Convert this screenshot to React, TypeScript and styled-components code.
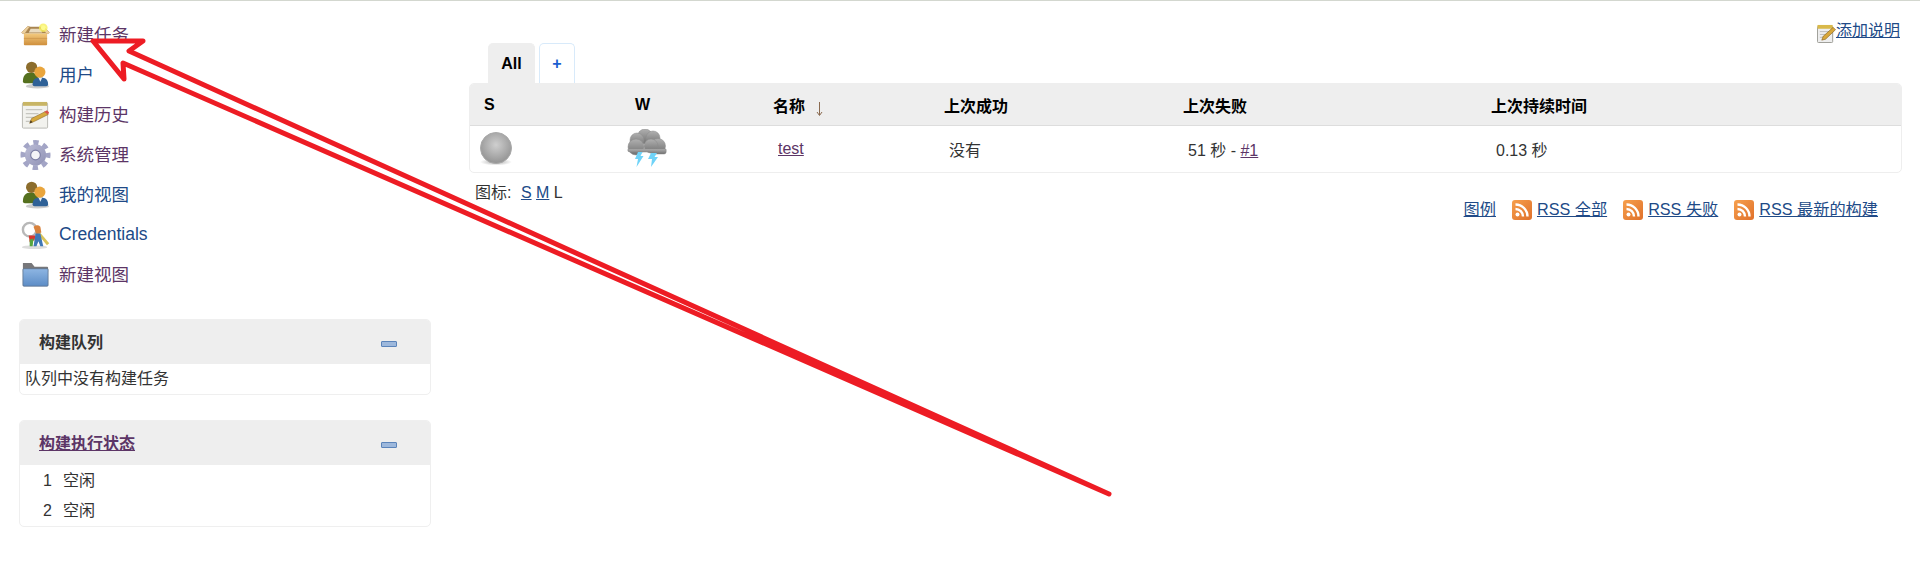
import React from "react";
import styled, { createGlobalStyle } from "styled-components";

const GlobalStyle = createGlobalStyle`
	html, body {
		margin: 0;
		padding: 0;
		background: #fff;
	}
	body {
		font-family: "Liberation Sans", "Noto Sans CJK SC", sans-serif;
		font-size: 16px;
		color: #333;
	}
`;

const Page = styled.div`
	position: relative;
	width: 1920px;
	height: 577px;
	overflow: hidden;
	border-top: 1px solid #d3d7cf;
	box-sizing: border-box;
	display: flex;
`;

const Side = styled.aside`
	width: 412px;
	margin: 0 38px 0 19px;
	padding-top: 13px;
	flex: none;
`;
const TaskRow = styled.div`
	height: 40px;
	padding-left: 1px;
	display: flex;
	align-items: center;
	gap: 8px;
	svg {
		flex: none;
		width: 31px;
		height: 31px;
		margin-top: 3px;
	}
`;
const Link = styled.a<{ $visited?: boolean; $bold?: boolean }>`
	color: ${(props) => (props.$visited ? "#5c3566" : "#204a87")};
	font-weight: ${(props) => (props.$bold ? 700 : 400)};
	text-decoration: underline;
	cursor: pointer;
`;
const TaskLink = styled(Link)<{ $latin?: boolean }>`
	font-size: 17.5px;
	text-decoration: none;
	margin-bottom: ${(props) => (props.$latin ? 0 : 2)}px;
`;

const Pane = styled.section`
	margin-top: 25px;
	border: 1px solid #efefef;
	border-radius: 5px;
	overflow: hidden;
`;
const PaneHead = styled.div`
	height: 44px;
	background: #eee;
	padding: 0 33px 3px 19px;
	display: flex;
	align-items: center;
	justify-content: space-between;
	font-weight: 700;
	box-sizing: border-box;
`;
const CollapseIcon = styled.span`
	width: 16px;
	height: 6px;
	background: #9db8dc;
	border: 1px solid #5b84ba;
	border-radius: 1px;
	box-sizing: border-box;
	margin-top: 7px;
`;
const QueueEmpty = styled.div`
	padding: 0 5px;
	height: 30px;
	line-height: 29px;
`;
const ExecutorList = styled.div`
	padding-top: 1px;
`;
const ExecutorRow = styled.div`
	display: flex;
	height: 30px;
	line-height: 30px;
`;
const ExecutorNum = styled.span`
	width: 32px;
	margin-right: 11px;
	text-align: right;
`;

const Main = styled.main`
	width: 1431px;
	flex: none;
`;
const DescriptionRow = styled.div`
	height: 42px;
	padding-top: 20px;
	box-sizing: border-box;
	display: flex;
	justify-content: flex-end;
	align-items: flex-start;
	line-height: 20px;
	svg {
		width: 19px;
		height: 19px;
		margin-top: 3px;
	}
`;
const Tabs = styled.div`
	display: flex;
	gap: 4px;
	padding-left: 19px;
	height: 40px;
`;
const Tab = styled.div<{ $active?: boolean }>`
	height: 40px;
	width: ${(props) => (props.$active ? "47px" : "36px")};
	box-sizing: border-box;
	border-radius: 5px 5px 0 0;
	background: ${(props) => (props.$active ? "#eee" : "#fff")};
	border: 1px solid ${(props) => (props.$active ? "#eee" : "#d8eafa")};
	border-bottom: none;
	color: ${(props) => (props.$active ? "#000" : "#1a5fd0")};
	font-weight: 700;
	display: flex;
	align-items: center;
	justify-content: center;
`;
const ProjectTable = styled.table`
	width: 100%;
	table-layout: fixed;
	border-collapse: separate;
	border-spacing: 0;
	border: 1px solid #eee;
	border-radius: 5px;
	overflow: hidden;
	height: 90px;
`;
const HeadCell = styled.th`
	height: 42px;
	padding: 0 0 0 14px;
	background: #eee;
	border-bottom: 1px solid #ddd;
	color: #000;
	font-weight: 700;
	text-align: left;
	box-sizing: border-box;
`;
const SortArrow = styled.svg`
	width: 7px;
	height: 14px;
	margin-left: 11px;
	vertical-align: -4px;
`;
const BodyCell = styled.td<{ $inset?: number }>`
	padding: 0 0 0 ${(props) => props.$inset ?? 19}px;
	height: 46px;
	svg {
		display: block;
	}
`;
const Footer = styled.div`
	display: flex;
	justify-content: space-between;
	align-items: flex-start;
	padding: 9px 22px 0 6px;
`;
const Legend = styled.div`
	line-height: 22px;
`;
const LegendLink = styled(Link)`
	margin-left: 5px;
`;
const RssList = styled.div`
	display: flex;
	align-items: center;
	margin-top: 16px;
	gap: 16px;
	line-height: 22px;
	font-size: 16.2px;
`;
const RssItem = styled.span`
	display: flex;
	align-items: center;
	gap: 5px;
	svg {
		width: 20px;
		height: 20px;
		margin-top: 2px;
	}
`;
const Arrow = styled.svg`
	position: absolute;
	left: 0;
	top: -1px;
	pointer-events: none;
`;

const BoxIcon = () => (
	<svg viewBox="0 0 32 32">
		<defs>
			<linearGradient id="boxFront" x1="0" y1="0" x2="0" y2="1">
				<stop offset="0" stopColor="#f3ca7e" />
				<stop offset="1" stopColor="#cf8f3c" />
			</linearGradient>
		</defs>
		<path d="M8 7h16l4 7H4z" fill="#a98550" />
		<path d="M11 9h10l2 4H9z" fill="#eadcc0" />
		<path d="M1.500 13 8 6.500l2 .5-5 7H2.500zM30.500 13 24 6.500l-2 .5 5 7h2.500z" fill="#ecd09e" stroke="#b98c50" strokeWidth=".5" />
		<path d="M4 14h24v11q0 1-1 1H5q-1 0-1-1z" fill="url(#boxFront)" />
		<path d="M4 19h24" stroke="#b87d34" strokeWidth="1" opacity=".4" />
		<circle cx="24" cy="8" r="4.500" fill="#f8ef5c" opacity=".8" />
		<circle cx="24" cy="8" r="2.500" fill="#fdfb8f" />
	</svg>
);
const UsersIcon = () => (
	<svg viewBox="0 0 32 32">
		<ellipse cx="18" cy="27" rx="12" ry="2.500" fill="#ccc" />
		<path d="M3 22c0-6 3-9 8-9s8 3 8 9q0 2-2 2H5q-2 0-2-2z" fill="#55701f" />
		<circle cx="12" cy="7.500" r="5.800" fill="#8c6d2d" />
		<path d="M13 25c0-5 3-7 8-7s8 2 8 7q0 2-2 2H15q-2 0-2-2z" fill="#2f6197" />
		<path d="M19 18h4l-2 4.500z" fill="#e7edf3" />
		<circle cx="20.500" cy="12.500" r="5.800" fill="#e9a53d" />
	</svg>
);
const NotepadIcon = () => (
	<svg viewBox="0 0 32 32">
		<rect x="2.500" y="3" width="26" height="26" rx="1" fill="#f2f2ee" stroke="#b9b9b3" />
		<rect x="3" y="2" width="25" height="4" fill="#c8b565" />
		<path d="M6 10h17M6 14h13M6 18h9M6 22h6" stroke="#c6c6c0" strokeWidth="1.200" />
		<path d="m10 24 2-5 14-7 3 3-14 7z" fill="#d7a93d" stroke="#8a6620" strokeWidth=".6" />
		<path d="m25 12 3-1.500 2 2.500-1 2z" fill="#d9534a" />
		<path d="m10 24 1-3 2 2z" fill="#4a3a20" />
	</svg>
);
const GearIcon = () => (
	<svg viewBox="0 0 32 32">
		<defs>
			<linearGradient id="gearFill" x1="0" y1="0" x2="1" y2="1">
				<stop offset="0" stopColor="#bcbdd6" />
				<stop offset="1" stopColor="#8f91b5" />
			</linearGradient>
		</defs>
		<circle cx="16" cy="15.500" r="11" fill="url(#gearFill)" />
		<circle cx="16" cy="15.500" r="13" fill="none" stroke="#a3a5c6" strokeWidth="5" strokeDasharray="5.500 4.710" strokeDashoffset="2.700" />
		<circle cx="16" cy="15.500" r="5" fill="#f4f4f8" stroke="#7d7fa5" strokeWidth="1.200" />
	</svg>
);
const KeysIcon = () => (
	<svg viewBox="0 0 32 32">
		<ellipse cx="15" cy="28" rx="13" ry="2" fill="#ddd" />
		<circle cx="10" cy="10" r="7" fill="none" stroke="#b8b8b8" strokeWidth="2.500" />
		<path d="m18 12 11 13" stroke="#d8c35a" strokeWidth="3" />
		<path d="M9 16h7l-1 5-5 2z" fill="#d8372f" />
		<path d="M14 7q4-3 7 0l1 6-5 2z" fill="#d9823c" />
		<path d="M16 14h5l3 13h-3l-2-5-2 5h-3z" fill="#3f77b5" />
		<path d="m10 20 4-1-1 8h-3z" fill="#57a53d" />
	</svg>
);
const FolderIcon = () => (
	<svg viewBox="0 0 32 32">
		<defs>
			<linearGradient id="folderFill" x1="0" y1="0" x2="0" y2="1">
				<stop offset="0" stopColor="#8eb6e3" />
				<stop offset="1" stopColor="#5c8cc6" />
			</linearGradient>
		</defs>
		<path d="M3 3h9l3 4h13q1 0 1 1v4H3z" fill="#77777a" />
		<rect x="3" y="9" width="26" height="18" rx="1" fill="url(#folderFill)" stroke="#5a6f8a" strokeWidth=".8" />
	</svg>
);
const BallIcon = () => (
	<svg width="32" height="34" viewBox="0 0 32 34">
		<defs>
			<radialGradient id="ballFill" cx=".5" cy=".4" r=".6">
				<stop offset="0" stopColor="#cfcfcf" />
				<stop offset="1" stopColor="#939393" />
			</radialGradient>
			<radialGradient id="ballShadow">
				<stop offset="0" stopColor="#aaa" />
				<stop offset="1" stopColor="#fff" />
			</radialGradient>
		</defs>
		<ellipse cx="16" cy="30" rx="16" ry="3.500" fill="url(#ballShadow)" />
		<circle cx="16" cy="16" r="15.500" fill="url(#ballFill)" stroke="#a9a9a9" />
	</svg>
);
const StormIcon = () => (
	<svg width="40" height="40" viewBox="0 0 40 40">
		<defs>
			<linearGradient id="cloudFill" x1="0" y1="0" x2="0" y2="1">
				<stop offset="0" stopColor="#b0b0b0" />
				<stop offset="1" stopColor="#707070" />
			</linearGradient>
		</defs>
		<g fill="url(#cloudFill)" stroke="#8a8a8a" strokeWidth=".5">
			<circle cx="18" cy="7.500" r="7.500" />
			<circle cx="26" cy="9" r="7" />
			<circle cx="10" cy="11" r="7" />
			<circle cx="31" cy="17" r="7.500" />
			<circle cx="24" cy="17" r="7" />
			<circle cx="9" cy="18" r="8" />
			<path d="M1 20h38q1 5-2 5H25q-2-3-6-2H3q-3 0-2-3z" />
		</g>
		<path d="M11 23h4.500l-2 4h3L9.500 38l1.500-8H8z" fill="#6fd3f8" />
		<path d="M24 24h6l-2.500 4h3.500l-7 10 1-8h-4z" fill="#6fd3f8" />
	</svg>
);
const NoteIcon = () => (
	<svg viewBox="0 0 20 20">
		<rect x=".5" y="2.500" width="16" height="17" rx="1" fill="#eee" stroke="#9a9a94" />
		<rect x=".5" y="1" width="16" height="4" fill="#d9b94a" />
		<path d="M3 8h10M3 11h7M3 14h5" stroke="#bbb" />
		<path d="m5 17 1.500-4L17 3.500l2.500 2.500L9 16z" fill="#d8a73b" stroke="#7d5a1a" strokeWidth=".6" />
	</svg>
);
const RssIcon = () => (
	<svg viewBox="0 0 20 20">
		<defs>
			<linearGradient id="rssFill" x1="0" y1="0" x2="1" y2="1">
				<stop offset="0" stopColor="#f6a04d" />
				<stop offset="1" stopColor="#e0702a" />
			</linearGradient>
		</defs>
		<rect width="20" height="20" rx="3" fill="url(#rssFill)" />
		<circle cx="5.500" cy="14.500" r="2" fill="#fff" />
		<path d="M3.500 9a7.500 7.500 0 0 1 7.500 7.500M3.500 4.500a12 12 0 0 1 12 12" fill="none" stroke="#fff" strokeWidth="2.400" />
	</svg>
);

const tasks = [
	{ label: "新建任务", icon: <BoxIcon />, visited: true },
	{ label: "用户", icon: <UsersIcon /> },
	{ label: "构建历史", icon: <NotepadIcon />, visited: true },
	{ label: "系统管理", icon: <GearIcon />, visited: true },
	{ label: "我的视图", icon: <UsersIcon /> },
	{ label: "Credentials", icon: <KeysIcon />, latin: true },
	{ label: "新建视图", icon: <FolderIcon />, visited: true },
];

const columnWidths = [151, 138, 171, 239, 308, 424];

function App() {
	return (
		<Page>
			<GlobalStyle />
			<Side>
				{tasks.map((task) => (
					<TaskRow key={task.label}>
						{task.icon}
						<TaskLink $visited={task.visited} $latin={task.latin}>
							{task.label}
						</TaskLink>
					</TaskRow>
				))}
				<Pane>
					<PaneHead>
						<span>构建队列</span>
						<CollapseIcon />
					</PaneHead>
					<QueueEmpty>队列中没有构建任务</QueueEmpty>
				</Pane>
				<Pane>
					<PaneHead>
						<Link $visited $bold>
							构建执行状态
						</Link>
						<CollapseIcon />
					</PaneHead>
					<ExecutorList>
						<ExecutorRow>
							<ExecutorNum>1</ExecutorNum>
							<span>空闲</span>
						</ExecutorRow>
						<ExecutorRow>
							<ExecutorNum>2</ExecutorNum>
							<span>空闲</span>
						</ExecutorRow>
					</ExecutorList>
				</Pane>
			</Side>
			<Main>
				<DescriptionRow>
					<NoteIcon />
					<Link>添加说明</Link>
				</DescriptionRow>
				<Tabs>
					<Tab $active>All</Tab>
					<Tab>+</Tab>
				</Tabs>
				<ProjectTable>
					<colgroup>
						{columnWidths.map((width, index) => (
							<col key={index} width={width} />
						))}
					</colgroup>
					<thead>
						<tr>
							<HeadCell>S</HeadCell>
							<HeadCell>W</HeadCell>
							<HeadCell>
								名称
								<SortArrow viewBox="0 0 7 14">
									<path d="M3.500 0v13M1 10l2.500 3.500L6 10" fill="none" stroke="#8a6a50" strokeWidth="1" />
								</SortArrow>
							</HeadCell>
							<HeadCell>上次成功</HeadCell>
							<HeadCell>上次失败</HeadCell>
							<HeadCell>上次持续时间</HeadCell>
						</tr>
					</thead>
					<tbody>
						<tr>
							<BodyCell $inset={10}>
								<BallIcon />
							</BodyCell>
							<BodyCell $inset={6}>
								<StormIcon />
							</BodyCell>
							<BodyCell>
								<Link $visited>test</Link>
							</BodyCell>
							<BodyCell>没有</BodyCell>
							<BodyCell>
								51 秒 - <Link $visited>#1</Link>
							</BodyCell>
							<BodyCell>0.13 秒</BodyCell>
						</tr>
					</tbody>
				</ProjectTable>
				<Footer>
					<Legend>
						图标: <LegendLink>S</LegendLink> <Link>M</Link> L
					</Legend>
					<RssList>
						<Link>图例</Link>
						<RssItem>
							<RssIcon />
							<Link>RSS 全部</Link>
						</RssItem>
						<RssItem>
							<RssIcon />
							<Link>RSS 失败</Link>
						</RssItem>
						<RssItem>
							<RssIcon />
							<Link>RSS 最新的构建</Link>
						</RssItem>
					</RssList>
				</Footer>
			</Main>
			<Arrow width="1920" height="577" viewBox="0 0 1920 577">
				<path
					d="M93 41 143 41 129 51 1109 494 123 63 124 79Z"
					fill="none"
					stroke="#ed1c24"
					strokeWidth="5"
					strokeLinejoin="round"
				/>
			</Arrow>
		</Page>
	);
}

export default App;
